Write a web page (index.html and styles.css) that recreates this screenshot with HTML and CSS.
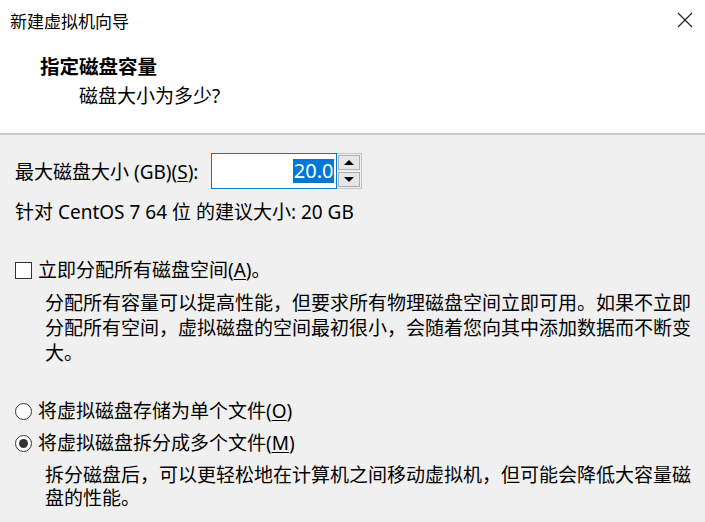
FILE: index.html
```html
<!DOCTYPE html>
<html lang="zh-CN">
<head>
    <meta charset="UTF-8">
    <title>新建虚拟机向导</title>
    <link rel="stylesheet" href="styles.css">
</head>
<body>

<div class="dialog">
    <div class="header">
        <div class="titlebar">
            <span class="title">新建虚拟机向导</span>
            <span class="close">
                <svg width="16" height="16" viewBox="0 0 16 16">
                    <path d="M1 1 L15 15 M15 1 L1 15" stroke="#222" stroke-width="1.2" fill="none"/>
                </svg>
            </span>
        </div>
        <h2 class="step-title">指定磁盘容量</h2>
        <p class="step-sub">磁盘大小为多少?</p>
    </div>

    <div class="content">
        <div class="size-row">
            <label for="size">最大磁盘大小 (GB)(<u>S</u>):</label>
            <div class="spin">
                <div class="spin-input"><span class="sel">20.0</span></div>
                <div class="spin-btns">
                    <div class="spin-btn"><span class="tri up"></span></div>
                    <div class="spin-btn"><span class="tri down"></span></div>
                </div>
            </div>
        </div>
        <p class="hint">针对 CentOS 7 64 位 的建议大小: 20 GB</p>

        <div class="option check-option">
            <span class="checkbox"></span>
            <span>立即分配所有磁盘空间(<u>A</u>)。</span>
        </div>
        <p class="desc">分配所有容量可以提高性能，但要求所有物理磁盘空间立即可用。如果不立即分配所有空间，虚拟磁盘的空间最初很小，会随着您向其中添加数据而不断变大。</p>

        <div class="radios">
            <div class="option">
                <span class="radio"></span>
                <span>将虚拟磁盘存储为单个文件(<u>O</u>)</span>
            </div>
            <div class="option">
                <span class="radio checked"></span>
                <span>将虚拟磁盘拆分成多个文件(<u>M</u>)</span>
            </div>
        </div>
        <p class="desc desc-split">拆分磁盘后，可以更轻松地在计算机之间移动虚拟机，但可能会降低大容量磁盘的性能。</p>
    </div>
</div>

</body>
</html>
```

FILE: styles.css
```css
body {
    margin: 0;
    font-family: "Noto Sans", "Noto Sans CJK SC", sans-serif;
    font-size: 19px;
    color: #000;
    background-color: #f0f0f0;
}

.dialog {
    width: 705px;
    height: 522px;
    overflow: hidden;
}

.header {
    background-color: #fff;
    border-bottom: 2px solid #c9c9c9;
    box-sizing: border-box;
    height: 135px;
}

.titlebar {
    display: flex;
    justify-content: space-between;
    align-items: center;
    height: 40px;
    padding: 0 12px 0 10px;
}

.title {
    font-size: 17px;
}

.close {
    display: flex;
    align-items: center;
}

.step-title {
    margin: 14px 0 0 40px;
    font-size: 19.5px;
    line-height: 26px;
    font-weight: bold;
}

.step-sub {
    margin: 3px 0 0 79px;
    line-height: 26px;
}

.content {
    padding: 18px 0 0 15px;
}

.size-row {
    display: flex;
    align-items: center;
    gap: 13px;
}

.spin {
    display: flex;
}

.spin-input {
    width: 122px;
    height: 34px;
    background-color: #fff;
    border: 1px solid #0078d7;
    display: flex;
    align-items: center;
    justify-content: flex-end;
    padding-right: 2px;
}

.sel {
    background-color: #0078d7;
    color: #fff;
    font-size: 20px;
    line-height: 24px;
    padding: 0 1px;
}

.spin-btns {
    display: flex;
    flex-direction: column;
    border: 1px solid #c4c4c4;
    border-left: none;
    width: 24px;
}

.spin-btn {
    flex: 1;
    display: flex;
    align-items: center;
    justify-content: center;
    background-color: #e6e6e6;
    border: 1px solid #adadad;
    margin: 1px;
}

.tri {
    width: 0;
    height: 0;
    border-left: 5px solid transparent;
    border-right: 5px solid transparent;
}

.tri.up {
    border-bottom: 5px solid #000;
}

.tri.down {
    border-top: 5px solid #000;
}

.hint {
    margin: 10px 0 0;
    line-height: 26px;
}

.option {
    display: flex;
    align-items: center;
    gap: 6px;
    line-height: 26px;
}

.check-option {
    margin-top: 32px;
}

.checkbox {
    width: 17px;
    height: 17px;
    border: 1px solid #333;
    background-color: #fff;
    box-sizing: border-box;
}

.desc {
    margin: 8px 0 0 30px;
    width: 650px;
    line-height: 25px;
}

.desc-split {
    margin-top: 8px;
    line-height: 23px;
}

.radios {
    margin-top: 32px;
    display: flex;
    flex-direction: column;
    gap: 6px;
}

.radio {
    width: 17px;
    height: 17px;
    border: 1px solid #333;
    border-radius: 50%;
    background-color: #fff;
    box-sizing: border-box;
    display: flex;
    align-items: center;
    justify-content: center;
}

.radio.checked::after {
    content: "";
    width: 9px;
    height: 9px;
    border-radius: 50%;
    background-color: #333;
}

u {
    text-underline-offset: 2px;
}
```
